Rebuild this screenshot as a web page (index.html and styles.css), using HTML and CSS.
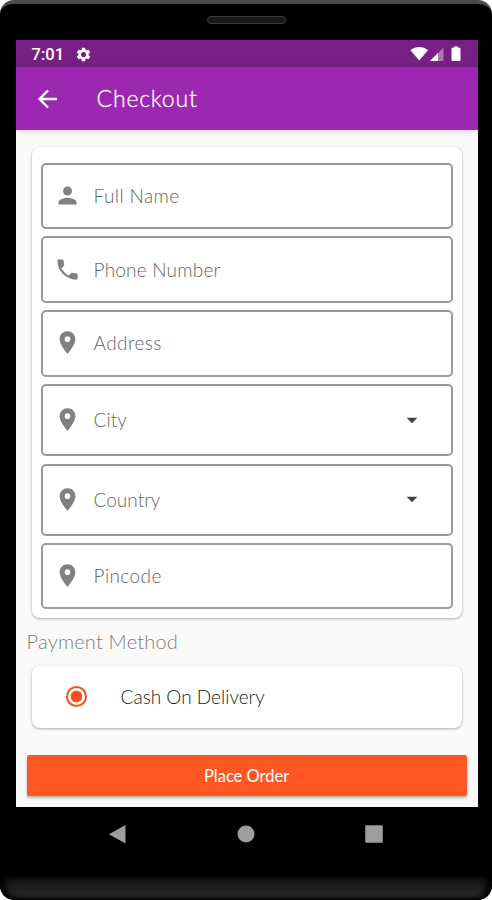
FILE: index.html
```html
<!DOCTYPE html>
<html lang="en">
<head>
<meta charset="utf-8">
<title>Checkout</title>
<link rel="stylesheet" href="styles.css">
</head>
<body>
<svg class="defs" width="0" height="0">
  <symbol id="pin" viewBox="0 0 24 24"><path d="M12 2C8.13 2 5 5.13 5 9c0 5.25 7 13 7 13s7-7.75 7-13c0-3.87-3.13-7-7-7zm0 9.5a2.5 2.5 0 0 1 0-5 2.500 2.500 0 0 1 0 5z"/></symbol>
  <symbol id="drop" viewBox="0 0 24 24"><path d="M7 10l5 5 5-5z"/></symbol>
</svg>
<div class="phone">
  <div class="bezel"><div class="speaker"></div></div>
  <div class="screen">
    <div class="status">
      <span class="time">7:01</span>
      <svg class="gear" viewBox="0 0 24 24"><path d="M19.14 12.94c.04-.3.06-.61.06-.94 0-.32-.02-.64-.07-.94l2.030-1.580a.49.49 0 0 0 .12-.61l-1.920-3.320a.488.488 0 0 0-.59-.22l-2.390.96c-.5-.38-1.030-.7-1.620-.94l-.36-2.540a.484.484 0 0 0-.48-.41h-3.840c-.24 0-.43.17-.47.41l-.36 2.540c-.59.24-1.130.57-1.620.94l-2.390-.96c-.22-.08-.47 0-.59.22L2.740 8.870c-.12.21-.08.47.12.61l2.030 1.580c-.05.3-.09.63-.09.94s.02.64.07.94l-2.030 1.580a.49.49 0 0 0-.12.61l1.920 3.320c.12.22.37.29.59.22l2.390-.96c.5.38 1.030.7 1.620.94l.36 2.540c.05.24.24.41.48.41h3.840c.24 0 .44-.17.47-.41l.36-2.540c.59-.24 1.130-.56 1.620-.94l2.390.96c.22.08.47 0 .59-.22l1.920-3.320c.12-.22.07-.47-.12-.61l-2.010-1.580zM12 15.600A3.600 3.600 0 1 1 12 8.400a3.600 3.600 0 0 1 0 7.200z"/></svg>
      <svg class="signals" viewBox="0 0 52 16"><path d="M.5 4.200C5.500-.2 13-.2 18 4.200L9.200 14.500z"/><path d="M33.500 1.500V15H20z" opacity=".4"/><path d="M28 7v8h-8z"/><path d="M44 1.500V.5h4v1h1q1.500 0 1.500 1.500v10.500q0 1.500-1.500 1.500h-6q-1.500 0-1.500-1.500V3q0-1.500 1.500-1.500z"/></svg>
    </div>
    <header class="appbar">
      <svg class="back" viewBox="0 0 20 20"><path d="M19 10H2M10 1.500L1.500 10l8.500 8.500"/></svg>
      <h1>Checkout</h1>
    </header>
    <main>
      <form class="card fields">
        <div class="field"><svg class="icon" viewBox="0 0 24 24"><path d="M12 12c2.210 0 4-1.790 4-4s-1.790-4-4-4-4 1.790-4 4 1.790 4 4 4zm0 2c-2.670 0-8 1.340-8 4v2h16v-2c0-2.660-5.330-4-8-4z"/></svg><span class="label full-name">Full Name</span></div>
        <div class="field"><svg class="icon" viewBox="0 0 24 24"><path d="M6.620 10.790c1.440 2.830 3.760 5.140 6.590 6.590l2.200-2.200c.27-.27.67-.36 1.020-.24 1.120.37 2.330.57 3.570.57.55 0 1 .45 1 1V20c0 .55-.45 1-1 1C10.610 21 3 13.390 3 4c0-.55.45-1 1-1h3.500c.55 0 1 .45 1 1 0 1.250.2 2.450.57 3.570.11.35.03.74-.25 1.020z"/></svg><span class="label phone-number">Phone Number</span></div>
        <div class="field"><svg class="icon"><use href="#pin"/></svg><span class="label address">Address</span></div>
        <div class="field select"><svg class="icon"><use href="#pin"/></svg><span class="label city">City</span><svg class="arrow"><use href="#drop"/></svg></div>
        <div class="field select"><svg class="icon"><use href="#pin"/></svg><span class="label country">Country</span><svg class="arrow"><use href="#drop"/></svg></div>
        <div class="field"><svg class="icon"><use href="#pin"/></svg><span class="label pincode">Pincode</span></div>
      </form>
      <h2>Payment Method</h2>
      <div class="card payment"><span class="radio"></span><span class="method">Cash On Delivery</span></div>
      <button class="order" type="button">Place Order</button>
    </main>
  </div>
  <nav>
    <svg viewBox="0 0 20 20"><path d="M17.500 1v18.500L1 10.200z"/></svg>
    <svg viewBox="0 0 20 20"><circle cx="10" cy="10" r="8.500"/></svg>
    <svg viewBox="0 0 20 20"><rect x="1.200" y="1.200" width="17.600" height="17.600" rx="1"/></svg>
  </nav>
  <div class="chin"></div>
</div>
</body>
</html>
```
FILE: styles.css
```css
* { box-sizing: border-box; }
body {
  margin: 0;
  background: #fff;
  font-family: Lato, "Open Sans", sans-serif;
  font-weight: 300;
}
.defs { position: absolute; }
.phone {
  width: 492px;
  height: 900px;
  display: flex;
  flex-direction: column;
  background: #000;
  border-top: 4px solid #4b4b4b;
  border-radius: 14px;
  overflow: hidden;
}
.bezel { height: 36px; padding-top: 12px; }
.speaker {
  width: 79px;
  height: 8px;
  margin: 0 auto;
  border: 1px solid #3c3c3c;
  border-radius: 4px;
  background: #181818;
}
.screen {
  width: 462px;
  height: 767px;
  margin-left: 15.600px;
  background: #fafafa;
  display: flex;
  flex-direction: column;
}
.status {
  height: 27px;
  background: #781f85;
  color: #fff;
  display: flex;
  align-items: center;
  padding: 2px 16px 0 16px;
}
.time { font: 500 16.500px/20px Roboto, sans-serif; width: 43px; }
.gear { width: 17px; height: 17px; fill: #fff; }
.signals { width: 52px; height: 16px; margin: -1px 0 0 auto; fill: #fff; }
.appbar {
  flex: none;
  height: 63px;
  display: flex;
  align-items: center;
  padding-left: 22px;
  background: #9c27b0;
  color: #fff;
  box-shadow: 0 1px 6px rgba(0, 0, 0, .15);
}
.back { width: 20px; height: 20px; fill: none; stroke: #fff; stroke-width: 2.300; }
h1 {
  margin: -1px 0 0 39px;
  font-size: 23px;
  font-weight: 300;
  letter-spacing: .8px;
  -webkit-text-stroke: .3px #fff;
}
main { padding: 17px 11px 0; }
.card {
  background: #fff;
  border-radius: 8px;
  margin: 0 5px;
  box-shadow: 0 1px 3px rgba(0, 0, 0, .32);
}
.fields {
  height: 471px;
  padding: 15.700px 9px 0;
  display: flex;
  flex-direction: column;
  gap: 7.500px;
}
.field {
  flex: none;
  height: 66.300px;
  display: flex;
  align-items: center;
  padding: 0 26px 1px 11px;
  border: 2px solid #999;
  border-radius: 5px;
}
.select { height: 72px; }
.icon { width: 27px; height: 27px; fill: #808080; margin-right: 13px; }
.label { font-size: 19px; color: #666; }
.full-name { letter-spacing: .4px; }
.phone-number { letter-spacing: .2px; }
.address { letter-spacing: .4px; }
.pincode { letter-spacing: .4px; }
.arrow { width: 26px; height: 26px; margin-left: auto; fill: #444; }
h2 {
  margin: 9px 0 0 0;
  font-size: 20px;
  line-height: 28px;
  font-weight: 300;
  letter-spacing: .2px;
  color: #808080;
}
.payment {
  height: 62px;
  margin-top: 11px;
  padding: 0 0 1px 34px;
  display: flex;
  align-items: center;
}
.radio {
  width: 21px;
  height: 21px;
  border: 2px solid #f4511e;
  border-radius: 50%;
  background: radial-gradient(circle, #f4511e 5.500px, #fff 6.200px);
}
.method { margin: -1px 0 0 34px; font-size: 19px; color: #222; }
.order {
  display: block;
  width: 440px;
  height: 41px;
  margin: 27px 0 0;
  border: 0;
  border-radius: 2px;
  background: #ff5722;
  box-shadow: 0 2px 3px rgba(0, 0, 0, .3);
  color: #fff;
  font: 400 16.500px Lato, sans-serif;
}
nav {
  height: 69px;
  padding: 17px 108px 0;
  display: flex;
  justify-content: space-between;
}
nav svg { width: 20px; height: 20px; fill: #9e9e9e; }
.chin {
  flex: 1;
  border-radius: 0 0 16px 16px;
  background: linear-gradient(#101010, #292929 85%, #111);
  box-shadow: inset 5px 0 6px #000, inset -5px 0 6px #000;
}
```
